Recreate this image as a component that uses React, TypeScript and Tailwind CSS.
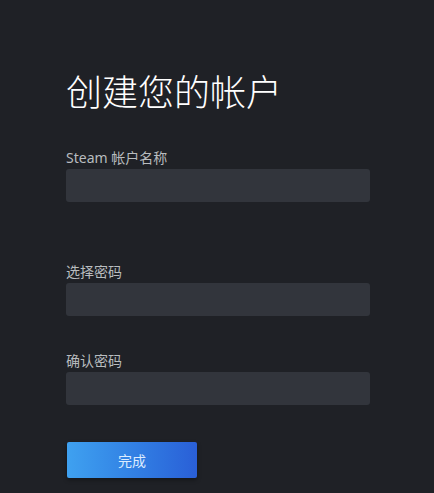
import React from "react"

type FieldProps = {
  label: string
  type?: string
  className?: string
}

function Field({ label, type = "text", className = "" }: FieldProps) {
  return (
    <div className={className}>
      <label className="block text-[14px] leading-[18px] text-[#b8bcbf] mb-[2px]">
        {label}
      </label>
      <input
        type={type}
        className="block w-full h-[33px] rounded-[3px] bg-[#32353c] px-3 text-[15px] text-white outline-none"
      />
    </div>
  )
}

export default function App() {
  return (
    <div
      className="min-h-[493px] w-full bg-[#1f2126]"
      style={{ fontFamily: '"Noto Sans", "Noto Sans CJK SC", sans-serif' }}
    >
      <div className="pl-[66px] pr-[64px] pt-[72px] pb-[15px]">
        <h1 className="text-[36px] leading-[42px] font-light text-white">
          创建您的帐户
        </h1>

        <Field label="Steam 帐户名称" className="mt-[35px]" />
        <Field label="选择密码" type="password" className="mt-[61px]" />
        <Field label="确认密码" type="password" className="mt-[36px]" />

        <button className="mt-[37px] ml-px h-[36px] w-[130px] rounded-[2px] bg-gradient-to-r from-[#3fa1f0] to-[#2a5fd7] text-[14px] text-[#dcecff] shadow-[0_2px_4px_rgba(0,0,0,0.35)]">
          完成
        </button>
      </div>
    </div>
  )
}
